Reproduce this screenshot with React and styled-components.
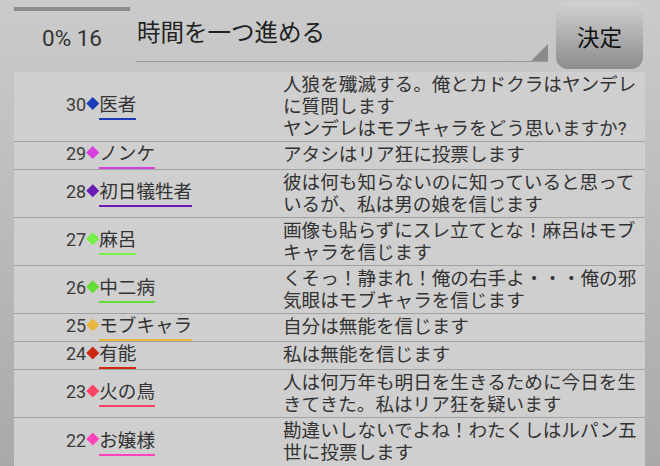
import React from 'react';
import styled, { createGlobalStyle } from 'styled-components';

const GlobalStyle = createGlobalStyle`
  html, body {
    margin: 0;
    padding: 0;
    height: 100%;
    overflow: hidden;
  }
  body {
    background: linear-gradient(#cbcbcb, #a9a9a9);
    font-family: "Roboto", "Noto Sans CJK JP", sans-serif;
    color: #333;
  }
`;

const entries = [
  { no: 30, name: '医者', color: '#1a3cb8', text: '人狼を殲滅する。俺とカドクラはヤンデレに質問します\nヤンデレはモブキャラをどう思いますか?' },
  { no: 29, name: 'ノンケ', color: '#d83fdc', text: 'アタシはリア狂に投票します' },
  { no: 28, name: '初日犠牲者', color: '#6a1ab5', text: '彼は何も知らないのに知っていると思っているが、私は男の娘を信じます' },
  { no: 27, name: '麻呂', color: '#77ee44', text: '画像も貼らずにスレ立てとな！麻呂はモブキャラを信じます' },
  { no: 26, name: '中二病', color: '#66dd33', text: 'くそっ！静まれ！俺の右手よ・・・俺の邪気眼はモブキャラを信じます' },
  { no: 25, name: 'モブキャラ', color: '#e8b83a', text: '自分は無能を信じます' },
  { no: 24, name: '有能', color: '#cc2a10', text: '私は無能を信じます' },
  { no: 23, name: '火の鳥', color: '#ff4466', text: '人は何万年も明日を生きるために今日を生きてきた。私はリア狂を疑います' },
  { no: 22, name: 'お嬢様', color: '#ff44bb', text: '勘違いしないでよね！わたくしはルパン五世に投票します' },
];

const App = () => {
  return (
    <>
      <GlobalStyle />
      <Header>
        <Status>
          <Progress />
          <StatusText>0% 16</StatusText>
        </Status>
        <Spinner>
          <SpinnerText>時間を一つ進める</SpinnerText>
        </Spinner>
        <DecideButton>決定</DecideButton>
      </Header>

      <Table>
        {entries.map((e) => (
          <Row key={e.no}>
            <NameCell>
              <Label>
                <No>{e.no}</No>
                <Diamond $color={e.color} />
                <Name $color={e.color}>{e.name}</Name>
              </Label>
            </NameCell>
            <Message>{e.text}</Message>
          </Row>
        ))}
      </Table>
    </>
  );
};

export default App;

const Header = styled.div`
  display: flex;
  align-items: flex-start;
  height: 72px;
  padding: 0 17px 0 14px;
`;

const Status = styled.div`
  width: 116px;
  display: flex;
  flex-direction: column;
  align-items: center;
`;

const Progress = styled.div`
  width: 100%;
  height: 4px;
  margin-top: 7px;
  background: #8c8c8c;
`;

const StatusText = styled.div`
  margin-top: 14px;
  font-size: 22.5px;
  line-height: 26px;
  color: #333;
`;

const Spinner = styled.div`
  position: relative;
  width: 411px;
  height: 42px;
  margin-left: 6px;
  padding: 19px 0 0 1px;
  box-sizing: content-box;
  border-bottom: 1px solid #9a9a9a;

  &::after {
    content: '';
    position: absolute;
    right: 0;
    bottom: 0;
    width: 17px;
    height: 17px;
    background: #8a8a8a;
    clip-path: polygon(100% 0, 100% 100%, 0 100%);
  }
`;

const SpinnerText = styled.div`
  font-size: 23.5px;
  line-height: 28px;
  color: #222;
`;

const DecideButton = styled.button`
  width: 87px;
  height: 67px;
  margin: 2px 0 0 8px;
  padding: 0;
  border: none;
  border-radius: 12px;
  background: linear-gradient(#d2d2d2, #8c8c8c);
  font-family: "Roboto", "Noto Sans CJK JP", sans-serif;
  font-size: 22.5px;
  color: #111;
`;

const Table = styled.div`
  margin: 0 15px 0 14px;
  padding-bottom: 30px;
  background: #cfcfcf;
`;

const Row = styled.div`
  display: grid;
  grid-template-columns: 269px 1fr;
  border-bottom: 1px solid #a2a2a2;
`;

const NameCell = styled.div`
  display: flex;
  align-items: center;
  padding: 1px 0 0 52px;
`;

const Label = styled.div`
  white-space: nowrap;
`;

const No = styled.span`
  font-size: 18px;
  color: #3c3c3c;
`;

const Diamond = styled.span`
  display: inline-block;
  width: 13px;
  height: 13px;
  vertical-align: 1px;
  background: ${(p) => p.$color};
  clip-path: polygon(50% 0, 100% 50%, 50% 100%, 0 50%);
`;

const Name = styled.span`
  display: inline-block;
  font-size: 18.6px;
  line-height: 20px;
  padding-bottom: 3px;
  border-bottom: 2px solid ${(p) => p.$color};
  color: #333;
`;

const Message = styled.div`
  padding: 2px 6px 1.1px 0;
  font-size: 18.6px;
  line-height: 22px;
  white-space: pre-line;
  line-break: strict;
  color: #333;
`;
